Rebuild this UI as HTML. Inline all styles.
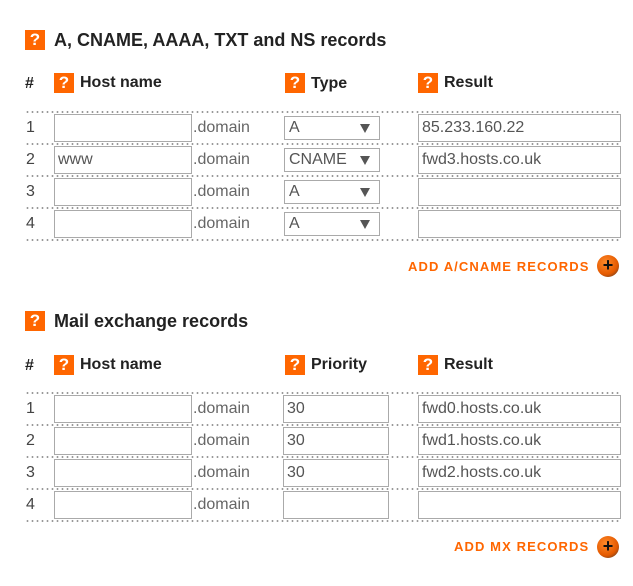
<!DOCTYPE html><html><head><style>
body{margin:0;width:633px;height:586px;background:#fff;font-family:"Liberation Sans",Arial,sans-serif;position:relative;overflow:hidden}
div,span{position:absolute}
.q{width:20px;height:20px;background:#f60;color:#fff;font-weight:bold;font-size:17px;line-height:20px;text-align:center}
.t{font-weight:bold;font-size:18px;color:#222;white-space:nowrap}
.h{font-weight:bold;font-size:16px;color:#222;white-space:nowrap}
.l{left:25px;width:596px;height:2px;background-image:radial-gradient(circle,#999 0.8px,transparent 1.1px);background-size:5px 2px}
.n{left:26px;font-size:16px;color:#444}
.i{border:1px solid #aaa;height:26px;box-sizing:content-box;font-size:16px;color:#555;line-height:26px;padding-left:3px}
.d{left:193px;font-size:16px;color:#666}
.s{left:284px;width:90px;height:22px;border:1px solid #aaa;font-size:16px;color:#555;line-height:22px;padding-left:4px;box-sizing:content-box}
.s:after{content:"";position:absolute;right:9px;top:7px;border-left:5px solid transparent;border-right:5px solid transparent;border-top:9px solid #555}
.a{font-weight:900;font-size:13px;color:#f60;letter-spacing:1.1px;white-space:nowrap}
.c{width:22px;height:22px;border-radius:50%;background:radial-gradient(circle at 40% 35%,#ff8a2a,#e55a00 60%,#333 100%);color:#111;font-weight:bold;font-size:18px;line-height:21px;text-align:center}
</style></head><body>
<div class="q" style="left:25px;top:30px">?</div><div class="t" style="left:54px;top:30px">A, CNAME, AAAA, TXT and NS records</div>
<div class="h" style="left:25px;top:75px">#</div>
<div class="q" style="left:54px;top:73px">?</div><div class="h" style="left:80px;top:74px">Host name</div>
<div class="q" style="left:285px;top:73px">?</div><div class="h" style="left:311px;top:75px">Type</div>
<div class="q" style="left:418px;top:73px">?</div><div class="h" style="left:444px;top:74px">Result</div>
<div class="l" style="top:111px"></div><div class="l" style="top:143px"></div><div class="l" style="top:175px"></div><div class="l" style="top:207px"></div><div class="l" style="top:239px"></div>
<div class="n" style="top:119px">1</div><div class="n" style="top:151px">2</div><div class="n" style="top:183px">3</div><div class="n" style="top:215px">4</div>
<div class="i" style="left:54px;top:114px;width:133px"></div><div class="i" style="left:54px;top:146px;width:133px">www</div><div class="i" style="left:54px;top:178px;width:133px"></div><div class="i" style="left:54px;top:210px;width:133px"></div>
<div class="d" style="top:119px">.domain</div><div class="d" style="top:151px">.domain</div><div class="d" style="top:183px">.domain</div><div class="d" style="top:215px">.domain</div>
<div class="s" style="top:116px">A</div><div class="s" style="top:148px">CNAME</div><div class="s" style="top:180px">A</div><div class="s" style="top:212px">A</div>
<div class="i" style="left:418px;top:114px;width:198px">85.233.160.22</div><div class="i" style="left:418px;top:146px;width:198px">fwd3.hosts.co.uk</div><div class="i" style="left:418px;top:178px;width:198px"></div><div class="i" style="left:418px;top:210px;width:198px"></div>
<div class="a" style="left:408px;top:259px">ADD A/CNAME RECORDS</div><div class="c" style="left:597px;top:255px">+</div>

<div class="q" style="left:25px;top:311px">?</div><div class="t" style="left:54px;top:311px">Mail exchange records</div>
<div class="h" style="left:25px;top:357px">#</div>
<div class="q" style="left:54px;top:355px">?</div><div class="h" style="left:80px;top:356px">Host name</div>
<div class="q" style="left:285px;top:355px">?</div><div class="h" style="left:311px;top:356px">Priority</div>
<div class="q" style="left:418px;top:355px">?</div><div class="h" style="left:444px;top:356px">Result</div>
<div class="l" style="top:392px"></div><div class="l" style="top:424px"></div><div class="l" style="top:456px"></div><div class="l" style="top:488px"></div><div class="l" style="top:520px"></div>
<div class="n" style="top:400px">1</div><div class="n" style="top:432px">2</div><div class="n" style="top:464px">3</div><div class="n" style="top:496px">4</div>
<div class="i" style="left:54px;top:395px;width:133px"></div><div class="i" style="left:54px;top:427px;width:133px"></div><div class="i" style="left:54px;top:459px;width:133px"></div><div class="i" style="left:54px;top:491px;width:133px"></div>
<div class="d" style="top:400px">.domain</div><div class="d" style="top:432px">.domain</div><div class="d" style="top:464px">.domain</div><div class="d" style="top:496px">.domain</div>
<div class="i" style="left:283px;top:395px;width:101px">30</div><div class="i" style="left:283px;top:427px;width:101px">30</div><div class="i" style="left:283px;top:459px;width:101px">30</div><div class="i" style="left:283px;top:491px;width:101px"></div>
<div class="i" style="left:418px;top:395px;width:198px">fwd0.hosts.co.uk</div><div class="i" style="left:418px;top:427px;width:198px">fwd1.hosts.co.uk</div><div class="i" style="left:418px;top:459px;width:198px">fwd2.hosts.co.uk</div><div class="i" style="left:418px;top:491px;width:198px"></div>
<div class="a" style="left:454px;top:539px">ADD MX RECORDS</div><div class="c" style="left:597px;top:536px">+</div>
</body></html>
